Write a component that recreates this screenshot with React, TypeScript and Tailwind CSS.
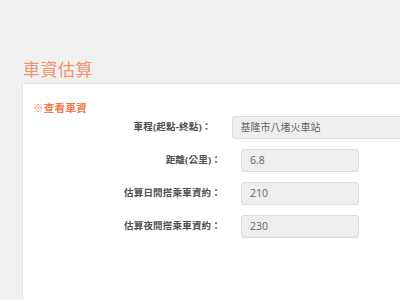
import React from "react";

const rows = [
  { label: "車程(起點-終點)：", value: "基隆市八堵火車站", wide: true },
  { label: "距離(公里)：", value: "6.8" },
  { label: "估算日間搭乘車資約：", value: "210" },
  { label: "估算夜間搭乘車資約：", value: "230" },
];

export default function App() {
  return (
    <div
      className="w-[400px] h-[300px] overflow-hidden bg-[#f0f0f0] pl-[22px] pt-[58px]"
      style={{ fontFamily: '"Open Sans", "Noto Sans CJK TC", sans-serif' }}
    >
      <h1 className="text-[17px] leading-[24px] text-[#f4936a] font-normal pl-[1px] tracking-[0.5px]">
        車資估算
      </h1>
      <div className="mt-[1px] bg-white border-l border-t border-[#e3e3e3] h-[240px] w-[400px] pl-[10px] pt-[17px]">
        <div className="text-[10.5px] leading-[14px] font-bold text-[#f27a4f] tracking-[0.3px]">
          ※查看車資
        </div>
        <div className="mt-[1px] flex flex-col gap-[10px]">
          {rows.map((r) => (
            <div key={r.label} className="flex items-center">
              <div className="w-[188px] text-right text-[9.5px] font-bold text-[#505050] tracking-[0.2px]">
                {r.label}
              </div>
              <div
                className={
                  r.wide
                    ? "ml-[20px] h-[23px] w-[200px] rounded-[3px] border border-[#dcdcdc] bg-[#eeeeee] pl-[8px] flex items-center text-[10px] text-[#666]"
                    : "ml-[20px] h-[23px] w-[118px] rounded-[3px] border border-[#dcdcdc] bg-[#eeeeee] pl-[8px] flex items-center text-[10.5px] text-[#666]"
                }
              >
                {r.value}
              </div>
            </div>
          ))}
        </div>
        <div className="mt-[68px] h-[1px] bg-[#f2f2f2]" />
      </div>
    </div>
  );
}
